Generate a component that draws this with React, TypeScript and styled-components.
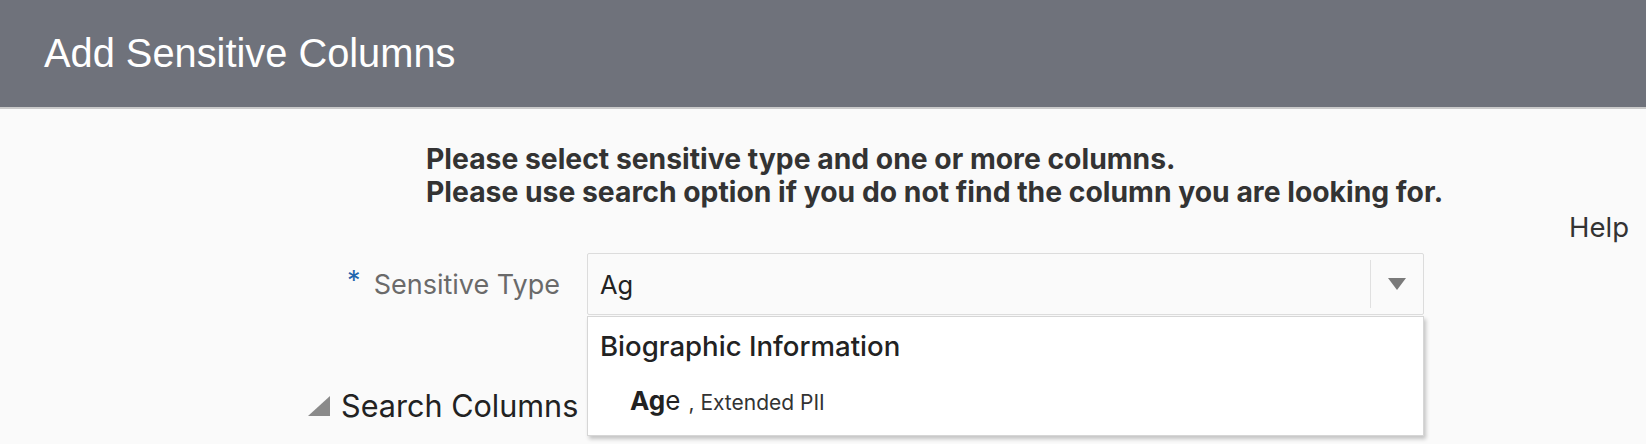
import React from "react";
import styled, { createGlobalStyle } from "styled-components";

const Global = createGlobalStyle`
  html, body { margin: 0; padding: 0; background: #fafafa; }
  body { font-family: Inter, "Liberation Sans", sans-serif; color: #333; overflow: hidden; }
`;

const Page = styled.div`
  width: 1646px;
  height: 444px;
  display: flex;
  flex-direction: column;
  background: #fafafa;
`;

const Header = styled.header`
  height: 107px;
  flex: none;
  display: flex;
  align-items: center;
  padding-left: 44px;
  background: #6f727b;
  border-bottom: 2px solid #cacaca;
`;

const Title = styled.h1`
  margin: 0;
  font-family: "Liberation Sans", Arial, sans-serif;
  font-weight: 400;
  font-size: 39.8px;
  color: #ffffff;
`;

const Body = styled.main`
  flex: 1;
  display: flex;
  flex-direction: column;
  padding-top: 34px;
`;

const Instructions = styled.p`
  margin: 0 0 0 426px;
  font-size: 28.3px;
  font-weight: 700;
  line-height: 33px;
  color: #333;
`;

const HelpRow = styled.div`
  display: flex;
  justify-content: flex-end;
  padding-right: 17px;
  height: 36px;
  align-items: center;
`;

const HelpLink = styled.a`
  font-size: 27.5px;
  color: #333;
  text-decoration: none;
`;

const FormRow = styled.div`
  display: flex;
  align-items: center;
  margin-top: 8px;
`;

const LabelCell = styled.div`
  width: 560px;
  display: flex;
  justify-content: flex-end;
  align-items: center;
  padding-right: 27px;
  box-sizing: content-box;
`;

const Required = styled.span`
  color: #1f65ad;
  font-size: 27px;
  align-self: flex-start;
  margin-right: 13px;
  margin-top: -4px;
`;

const Label = styled.label`
  font-size: 27px;
  color: #6a6a6a;
`;

const Field = styled.div`
  position: relative;
  width: 837px;
`;

const Combo = styled.div`
  height: 62px;
  box-sizing: border-box;
  border: 1px solid #dcdcdc;
  border-radius: 2px;
  display: flex;
  align-items: center;
  background: #fafafa;
`;

const ComboInput = styled.div`
  flex: 1;
  padding-left: 12px;
  font-size: 25.5px;
  color: #222;
`;

const ComboButton = styled.div`
  width: 52px;
  height: 48px;
  border-left: 1px solid #e0e0e0;
  display: flex;
  align-items: center;
  justify-content: center;
`;

const Popup = styled.div`
  position: absolute;
  left: 0;
  top: 63px;
  width: 837px;
  height: 120px;
  box-sizing: border-box;
  background: #ffffff;
  border: 1px solid #d6d6d6;
  box-shadow: 2px 3px 4px rgba(0, 0, 0, 0.22);
  display: flex;
  flex-direction: column;
  padding: 12px 0 0 12px;
  z-index: 2;
`;

const GroupHeader = styled.div`
  font-size: 27.6px;
  font-weight: 500;
  color: #222;
  height: 34px;
  display: flex;
  align-items: center;
`;

const Option = styled.div`
  margin-top: 22px;
  padding-left: 30px;
  display: flex;
  align-items: baseline;
  color: #222;
`;

const Match = styled.b`
  font-size: 26px;
  font-weight: 700;
`;

const Rest = styled.span`
  font-size: 26px;
`;

const Meta = styled.span`
  font-size: 21px;
  color: #333;
  margin-left: 8px;
`;

const SectionRow = styled.div`
  display: flex;
  align-items: center;
  margin-top: 72px;
  padding-left: 308px;
  gap: 11px;
`;

const SectionTitle = styled.h2`
  margin: 0;
  font-size: 30.6px;
  font-weight: 400;
  color: #222;
`;

export default function App() {
  return (
    <>
      <Global />
      <Page>
        <Header>
          <Title>Add Sensitive Columns</Title>
        </Header>
        <Body>
          <Instructions>
            Please select sensitive type and one or more columns.
            <br />
            Please use search option if you do not find the column you are looking for.
          </Instructions>
          <HelpRow>
            <HelpLink href="#">Help</HelpLink>
          </HelpRow>
          <FormRow>
            <LabelCell>
              <Required>*</Required>
              <Label>Sensitive Type</Label>
            </LabelCell>
            <Field>
              <Combo>
                <ComboInput>Ag</ComboInput>
                <ComboButton>
                  <svg width="18" height="12" viewBox="0 0 18 12">
                    <polygon points="0,0 18,0 9,12" fill="#7a7a7a" />
                  </svg>
                </ComboButton>
              </Combo>
              <Popup>
                <GroupHeader>Biographic Information</GroupHeader>
                <Option>
                  <Match>Ag</Match>
                  <Rest>e</Rest>
                  <Meta>, Extended PII</Meta>
                </Option>
              </Popup>
            </Field>
          </FormRow>
          <SectionRow>
            <svg width="22" height="20" viewBox="0 0 22 20">
              <polygon points="22,0 22,20 0,20" fill="#8a8a8a" />
            </svg>
            <SectionTitle>Search Columns</SectionTitle>
          </SectionRow>
        </Body>
      </Page>
    </>
  );
}
